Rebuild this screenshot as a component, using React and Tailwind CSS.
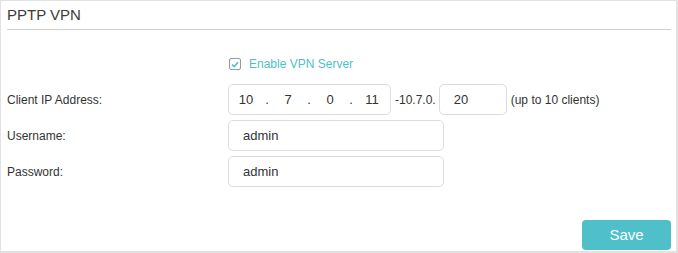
import { useState } from 'react';

const IpInput = ({ parts }) => (
  <div className="flex items-center h-[31px] w-[163px] border border-[#dcdcdc] rounded-[5px] pl-[2px] text-[13px] text-[#333]">
    {parts.map((p, i) => (
      <div key={i} className="flex items-center">
        {i > 0 && <span className="w-[12px] text-center">.</span>}
        <span className="w-[30px] text-center">{p}</span>
      </div>
    ))}
  </div>
);

const Row = ({ label, children }) => (
  <div className="flex items-center">
    <div className="w-[221px] text-[12px] text-[#333]">{label}</div>
    {children}
  </div>
);

const TextBox = ({ value }) => (
  <div className="flex items-center h-[31px] w-[216px] border border-[#dcdcdc] rounded-[5px] pl-[14px] text-[13px] text-[#333]">
    {value}
  </div>
);

export default function App() {
  const [enabled, setEnabled] = useState(true);

  return (
    <div
      className="w-[678px] h-[253px] bg-white border-t border-l border-r-2 border-b-2 border-[#e2e2e2] pl-[6px] pr-[5px] flex flex-col"
      style={{ fontFamily: '"Liberation Sans", Arial, sans-serif' }}
    >
      <div className="h-[29px] border-b border-[#cfcfcf] flex items-center pt-[1px] text-[15px] text-[#3a3a3a]">
        PPTP VPN
      </div>

      <div className="flex items-center pl-[222px] mt-[28px] h-[12px]">
        <button
          onClick={() => setEnabled(!enabled)}
          className="w-[12px] h-[12px] border border-[#9a9a9a] rounded-[2px] flex items-center justify-center"
        >
          {enabled && (
            <svg width="8" height="7" viewBox="0 0 8 7">
              <path d="M1 3.5 L3.2 5.6 L7 1.2" fill="none" stroke="#4fc0ca" strokeWidth="1.6" />
            </svg>
          )}
        </button>
        <span className="ml-[8px] text-[12px] text-[#4fc0ca]">Enable VPN Server</span>
      </div>

      <div className="mt-[14px] flex flex-col gap-[5px]">
        <Row label="Client IP Address:">
          <IpInput parts={['10', '7', '0', '11']} />
          <span className="ml-[4px] text-[12px] text-[#333]">-10.7.0.</span>
          <div className="ml-[3px] flex items-center h-[31px] w-[68px] border border-[#dcdcdc] rounded-[5px] pl-[14px] text-[13px] text-[#333]">
            20
          </div>
          <span className="ml-[4px] text-[12px] text-[#333]">(up to 10 clients)</span>
        </Row>
        <Row label="Username:">
          <TextBox value="admin" />
        </Row>
        <Row label="Password:">
          <TextBox value="admin" />
        </Row>
      </div>

      <div className="flex justify-end mt-auto mb-[1px]">
        <button className="w-[89px] h-[30px] rounded-[4px] bg-[#4fc0ca] text-white text-[15px]">
          Save
        </button>
      </div>
    </div>
  );
}
